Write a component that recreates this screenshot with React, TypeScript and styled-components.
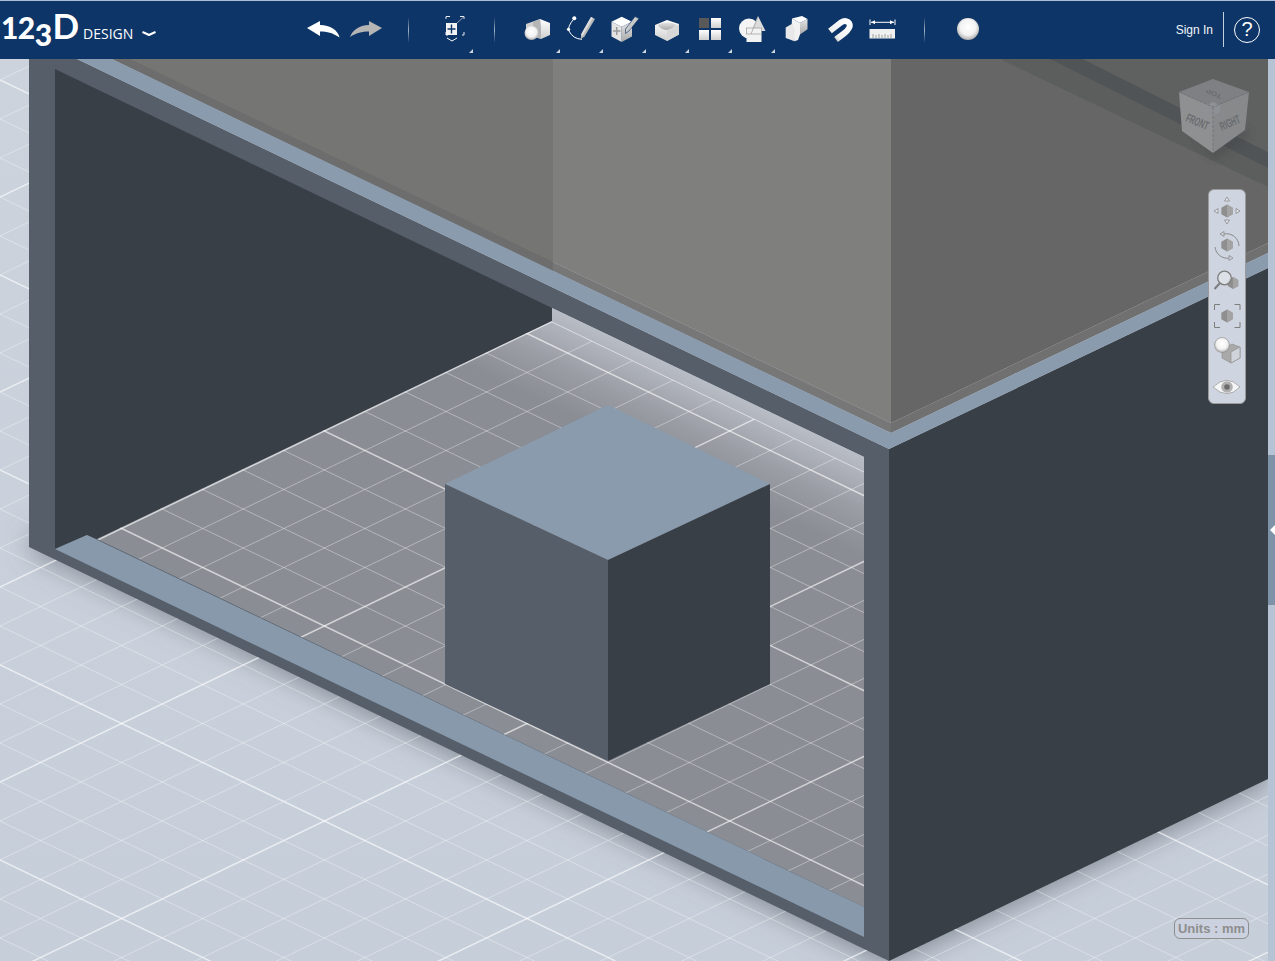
import React from "react";
import styled, { createGlobalStyle } from "styled-components";

const GlobalStyle = createGlobalStyle`
  html, body { margin: 0; padding: 0; height: 100%; overflow: hidden; background: #c8d0da; }
  #root { height: 100%; }
`;

const Page = styled.div`
  display: flex;
  flex-direction: column;
  width: 1275px;
  height: 961px;
  font-family: "Liberation Sans", Arial, sans-serif;
`;

const Toolbar = styled.header`
  display: flex;
  align-items: stretch;
  flex: 0 0 59px;
  height: 59px;
  padding-left: 1px;
  box-sizing: border-box;
  background: #0d3568;
  box-shadow: inset 0 1px 0 #a9bfd8;
  color: #fff;
`;

const Logo = styled.div`
  display: flex;
  align-items: baseline;
  width: 159px;
  padding-top: 11px;
  box-sizing: border-box;
  font-family: Lato, "Open Sans", sans-serif;
  line-height: 29px;
`;

const LogoDigit = styled.span<{ $drop?: number }>`
  display: inline-block;
  font-size: 30px;
  font-weight: 900;
  letter-spacing: -0.6px;
  transform: translateY(${(p) => p.$drop ?? 0}px);
`;

const LogoD = styled.span`
  font-size: 35px;
  font-weight: 700;
  margin-left: 1px;
`;

const DesignLabel = styled.span`
  font-family: "Open Sans", sans-serif;
  font-size: 14px;
  margin-left: 4px;
`;

const Chevron = styled.svg`
  width: 16px;
  height: 8px;
  margin-left: 8px;
  align-self: center;
  position: relative;
  top: -1px;
`;

const ToolGroup = styled.div<{ $gap?: number }>`
  display: flex;
  margin-left: ${(p) => p.$gap ?? 0}px;
`;

const Divider = styled.div<{ $gap: number }>`
  width: 1px;
  height: 26px;
  align-self: center;
  margin-left: ${(p) => p.$gap}px;
  position: relative;
  background: linear-gradient(180deg, rgba(170, 185, 205, 0), #a4b2c6 50%, rgba(170, 185, 205, 0));
`;

const ToolCell = styled.div<{ $menu?: boolean; $w: number }>`
  position: relative;
  width: ${(p) => p.$w}px;
  height: 59px;
  &::after {
    content: "";
    display: ${(p) => (p.$menu ? "block" : "none")};
    position: absolute;
    right: 0;
    bottom: 6px;
    width: 0;
    height: 0;
    border-style: solid;
    border-width: 0 0 4px 4px;
    border-color: transparent transparent #cfd6e0 transparent;
  }
`;

const ToolIcon = styled.svg`
  display: block;
  width: 100%;
  height: 100%;
`;

const Account = styled.div`
  display: flex;
  align-items: center;
  margin-left: auto;
  padding-right: 15px;
  gap: 10px;
`;

const SignIn = styled.span`
  font-size: 12px;
  color: #f2f5f9;
`;

const AccountRule = styled.div`
  width: 1px;
  height: 35px;
  background: #c4d0df;
`;

const HelpCircle = styled.div`
  width: 26px;
  height: 26px;
  box-sizing: border-box;
  border: 1.5px solid #fff;
  border-radius: 50%;
  display: flex;
  align-items: center;
  justify-content: center;
  font-size: 20px;
  font-weight: 400;
  color: #fff;
`;

const Workspace = styled.main`
  display: flex;
  flex: 1;
  min-height: 0;
`;

const Viewport = styled.section`
  position: relative;
  width: 1268px;
  height: 902px;
  overflow: hidden;
`;

const Scene = styled.svg`
  display: block;
  width: 1268px;
  height: 902px;
`;

const SidePanel = styled.aside`
  width: 7px;
  background: #b5c3d5;
  overflow: hidden;
`;

const SideHandle = styled.div`
  position: relative;
  margin-top: 396px;
  height: 150px;
  background: #7f93a8;
  &::after {
    content: "";
    position: absolute;
    left: 2px;
    top: 70px;
    width: 10px;
    height: 10px;
    background: #fff;
    clip-path: polygon(50% 0, 100% 50%, 50% 100%, 0 50%);
  }
`;

const CubeOverlay = styled.svg`
  position: absolute;
  left: 1170px;
  top: 11px;
  width: 90px;
  height: 95px;
`;

const NavBar = styled.nav`
  position: absolute;
  top: 130px;
  right: 22px;
  width: 38px;
  height: 215px;
  box-sizing: border-box;
  padding-top: 3px;
  display: flex;
  flex-direction: column;
  background: #cfd5e0;
  border: 1px solid #9a9a9a;
  border-radius: 6px;
`;

const NavIcon = styled.svg`
  display: block;
  flex: 0 0 35px;
  width: 36px;
  height: 35px;
`;

const UnitsBadge = styled.div`
  position: absolute;
  left: 1174px;
  top: 859px;
  width: 75px;
  height: 21px;
  box-sizing: border-box;
  border: 1px solid #8f8f8f;
  border-radius: 6px;
  background: #cbd1de;
  display: flex;
  align-items: center;
  justify-content: center;
  font-size: 13px;
  font-weight: 700;
  color: #8e8e8e;
  white-space: nowrap;
`;

const HiddenDefs = styled.svg`
  position: absolute;
  width: 0;
  height: 0;
`;

const M = 0.481;
const X1 = 1268;
const STEP = 39;

function Grid() {
  const lines: React.ReactElement[] = [];
  for (let k = -30; k <= 30; k++) {
    const c = 470 + k * STEP;
    const major = ((k % 5) + 5) % 5 === 0;
    lines.push(
      <line key={`a${k}`} x1={0} y1={c} x2={X1} y2={c + M * X1} stroke="#fff" strokeOpacity={major ? 0.62 : 0.36} strokeWidth={major ? 1.5 : 1} />
    );
  }
  for (let k = -14; k <= 30; k++) {
    const d = 587 + k * STEP;
    const major = ((k % 5) + 5) % 5 === 0;
    lines.push(
      <line key={`b${k}`} x1={0} y1={d} x2={X1} y2={d - M * X1} stroke="#fff" strokeOpacity={major ? 0.62 : 0.36} strokeWidth={major ? 1.5 : 1} />
    );
  }
  return <g>{lines}</g>;
}

function SceneDrawing() {
  const floor = "552,308 864,457 864,907 97,539 552,321";
  return (
    <Scene viewBox="0 59 1268 902">
      <defs>
        <linearGradient id="floorGrad" gradientUnits="userSpaceOnUse" x1="700" y1="378" x2="661" y2="459">
          <stop offset="0" stopColor="#b9bdc6" />
          <stop offset="0.55" stopColor="#9a9da4" />
          <stop offset="1" stopColor="#8a8d94" />
        </linearGradient>
        <linearGradient id="groundGrad" x1="0" y1="0" x2="0" y2="1">
          <stop offset="0" stopColor="#ccd3dd" />
          <stop offset="1" stopColor="#c6ced9" />
        </linearGradient>
        <filter id="softShadow" x="-10%" y="-10%" width="120%" height="120%">
          <feGaussianBlur stdDeviation="13" />
        </filter>
        <clipPath id="floorClip">
          <polygon points={floor} />
        </clipPath>
      </defs>
      <rect x="0" y="59" width="1268" height="902" fill="url(#groundGrad)" />
      <g filter="url(#softShadow)">
        <polygon points="34,530 30,552 889,966 1268,784 1268,740 889,900" fill="#737a84" fillOpacity="0.8" />
      </g>
      <Grid />
      <polygon points="29,59 77,59 889,449 889,961 29,547" fill="#565e6a" />
      <polygon points="55,69 552,308 552,321 97,539 87,535 55,549" fill="#393f47" />
      <polygon points={floor} fill="url(#floorGrad)" />
      <g clipPath="url(#floorClip)">
        <Grid />
      </g>
      <polygon points="552,308 864,457 864,472 552,322" fill="url(#floorGrad)" />
      <line x1="552" y1="322" x2="864" y2="472" stroke="#fff" strokeOpacity="0.55" strokeWidth="1" />
      <polygon points="55,549 87,535 864,907 864,937" fill="#8799ab" />
      <polygon points="608,405 770,484 608,560 445,484" fill="#8a9bad" />
      <polygon points="445,484 608,560 608,761 445,684" fill="#565e6a" />
      <polygon points="608,560 770,484 770,684 608,761" fill="#393f47" />
      <polygon points="889,449 1268,268 1268,779 889,961" fill="#393f47" />
      <polygon points="553,59 891,59 891,423 553,262" fill="#7f7f7d" />
      <polygon points="112,59 553,59 553,272" fill="#757574" />
      <polygon points="891,59 1268,59 1268,243 891,423" fill="#666666" />
      <polygon points="1000,59 1050,59 1268,168 1268,187" fill="#5c5e5d" />
      <polygon points="1050,59 1083,59 1268,152 1268,168" fill="#505456" />
      <polygon points="1083,59 1268,59 1268,152" fill="#5f6060" />
      <polygon points="112,59 130,59 553,262 553,271" fill="#6d6d6d" />
      <polygon points="553,262 891,423 891,433 553,271" fill="#777777" />
      <polygon points="891,423 1268,243 1268,253 891,433" fill="#707070" />
      <polygon points="77,59 112,59 891,433 1268,253 1268,268 889,449" fill="#8a9bad" />
    </Scene>
  );
}

function ViewCube() {
  return (
    <CubeOverlay viewBox="1170 70 90 95">
      <defs>
        <filter id="cubeBlur" x="-30%" y="-30%" width="160%" height="160%">
          <feGaussianBlur stdDeviation="4" />
        </filter>
      </defs>
      <polygon points="1190,132 1213,152 1250,128 1246,138 1214,160" fill="#3f4244" fillOpacity="0.55" filter="url(#cubeBlur)" />
      <polygon points="1213,79 1249,92 1213,107 1179,92" fill="#7f8083" />
      <polygon points="1179,92 1213,107 1213,153 1182,131" fill="#8f9091" />
      <polygon points="1213,107 1249,92 1245,130 1213,153" fill="#87898a" />
      <polygon points="1213,102 1220,105 1220,112 1213,116 1207,112 1207,105" fill="#8d9094" />
      <path d="M1179 92 L1213 107 L1249 92 M1213 107 V153" stroke="#6e7074" strokeWidth="0.8" strokeDasharray="3 1.5" fill="none" />
      <text transform="translate(1185 121) rotate(23) scale(0.68 1.2)" fontFamily="Liberation Sans, sans-serif" fontSize="10" fontWeight="700" fill="#696c70">FRONT</text>
      <text transform="translate(1221.7 130.7) rotate(-23) scale(0.68 1.2)" fontFamily="Liberation Sans, sans-serif" fontSize="10" fontWeight="700" fill="#696c70">RIGHT</text>
      <text transform="translate(1222 95) rotate(204) scale(1 0.8)" fontFamily="Liberation Sans, sans-serif" fontSize="8" fontWeight="700" fill="#696c70">TOP</text>
    </CubeOverlay>
  );
}

const hexPts = (cx: number, cy: number, r: number) =>
  [
    [cx, cy - r],
    [cx + r * 0.87, cy - r / 2],
    [cx + r * 0.87, cy + r / 2],
    [cx, cy + r],
    [cx - r * 0.87, cy + r / 2],
    [cx - r * 0.87, cy - r / 2],
  ]
    .map((p) => p.join(","))
    .join(" ");

function Hex({ cx, cy, r = 6.5 }: { cx: number; cy: number; r?: number }) {
  return (
    <g>
      <polygon points={hexPts(cx, cy, r)} fill="#8f8f8f" />
      <polygon points={`${cx},${cy - r} ${cx + r * 0.87},${cy - r / 2} ${cx + r * 0.87},${cy + r / 2} ${cx},${cy + r}`} fill="#a3a3a3" />
    </g>
  );
}

function NavTools() {
  const vb = (i: number) => `1209 ${193 + 35 * i} 36 35`;
  return (
    <NavBar>
      <NavIcon viewBox={vb(0)}>
        <Hex cx={1227} cy={211} />
        <path d="M1227 197 L1229.5 201 H1224.5 Z M1227 224 L1229.5 220 H1224.5 Z M1214 211 L1218 208.5 V213.5 Z M1240 211 L1236 208.5 V213.5 Z" fill="#e2e5eb" stroke="#8a8a8a" strokeWidth="0.8" />
      </NavIcon>
      <NavIcon viewBox={vb(1)}>
        <Hex cx={1227} cy={245} />
        <path d="M1224 234 A12.5 12.5 0 0 1 1239 246 M1215 247 A12.5 12.5 0 0 0 1230 258" fill="none" stroke="#8a8a8a" strokeWidth="1" />
        <path d="M1224 231.5 V236.5 L1220 234 Z M1229 255.5 V260.5 L1233 258 Z" fill="#cfd5e0" stroke="#8a8a8a" strokeWidth="0.8" />
      </NavIcon>
      <NavIcon viewBox={vb(2)}>
        <Hex cx={1233} cy={283} r={6} />
        <circle cx="1224.5" cy="278" r="6.8" fill="#dfe3ea" fillOpacity="0.8" stroke="#7d7d7d" strokeWidth="1.3" />
        <line x1="1220" y1="283" x2="1214.5" y2="289" stroke="#7d7d7d" strokeWidth="2" />
      </NavIcon>
      <NavIcon viewBox={vb(3)}>
        <path d="M1214.5 310 V304.5 H1220 M1234.5 304.5 H1240 V310 M1214.5 322 V327.5 H1220 M1234.5 327.5 H1240 V322" fill="none" stroke="#7d7d7d" strokeWidth="1" />
        <Hex cx={1227} cy={316} />
      </NavIcon>
      <NavIcon viewBox={vb(4)}>
        <polygon points="1222,350 1232,344 1240,347 1240,358 1231,363 1222,358" fill="#a9a9a9" stroke="#929292" strokeWidth="0.7" />
        <polygon points="1231,352 1240,347 1240,358 1231,363" fill="#d0d3d9" stroke="#929292" strokeWidth="0.7" />
        <circle cx="1222" cy="345" r="7.5" fill="url(#sphereGrad)" stroke="#8a8a8a" strokeWidth="0.6" />
      </NavIcon>
      <NavIcon viewBox={vb(5)}>
        <path d="M1213 387 Q1227 373.5 1240 387 Q1227 400.5 1213 387 Z" fill="#f4f5f7" stroke="#9a9a9a" strokeWidth="0.8" />
        <circle cx="1227" cy="387" r="5.8" fill="#b0b0b0" />
        <circle cx="1227" cy="387" r="2.8" fill="#6b6b6b" />
      </NavIcon>
    </NavBar>
  );
}

export default function App() {
  return (
    <Page>
      <GlobalStyle />
      <HiddenDefs aria-hidden="true">
        <defs>
          <linearGradient id="lightGrad" x1="0" y1="0" x2="0" y2="1">
            <stop offset="0" stopColor="#ffffff" />
            <stop offset="1" stopColor="#cfcfcf" />
          </linearGradient>
          <linearGradient id="sideGrad" x1="0" y1="0" x2="0" y2="1">
            <stop offset="0" stopColor="#e4e4e4" />
            <stop offset="1" stopColor="#a9a9a9" />
          </linearGradient>
          <radialGradient id="sphereGrad" cx="0.5" cy="0.42" r="0.6">
            <stop offset="0" stopColor="#ffffff" />
            <stop offset="0.6" stopColor="#f2f2f2" />
            <stop offset="1" stopColor="#a5a5a5" />
          </radialGradient>
          <linearGradient id="magnetGrad" x1="0" y1="1" x2="1" y2="0">
            <stop offset="0" stopColor="#8e8e8e" />
            <stop offset="0.25" stopColor="#f0f0f0" />
            <stop offset="1" stopColor="#ffffff" />
          </linearGradient>
        </defs>
      </HiddenDefs>

      <Toolbar>
        <Logo>
          <LogoDigit>1</LogoDigit>
          <LogoDigit>2</LogoDigit>
          <LogoDigit $drop={7}>3</LogoDigit>
          <LogoD>D</LogoD>
          <DesignLabel>DESIGN</DesignLabel>
          <Chevron viewBox="0 0 16 8">
            <path d="M1.5 2 Q5 3.5 8 5 Q11 3.5 14.5 2" fill="none" stroke="#fff" strokeWidth="2" />
          </Chevron>
        </Logo>

        <ToolGroup $gap={144}>
          <ToolCell $w={40}>
            <ToolIcon viewBox="304 0 40 59">
              <path d="M307 28 L320 21 L320 25 C330 25 338 30 339.5 37.5 C333 33 327 31.5 320 31.5 L320 36 Z" fill="#fff" />
            </ToolIcon>
          </ToolCell>
          <ToolCell $w={44}>
            <ToolIcon viewBox="344 0 44 59">
              <path d="M382 28 L369 21 L369 25 C359 25 352 31 350 37 C356 33 362 31.5 369 31.5 L369 36 Z" fill="#b5b5b5" />
            </ToolIcon>
          </ToolCell>
        </ToolGroup>

        <Divider $gap={20} />

        <ToolGroup $gap={21}>
          <ToolCell $w={43} $menu>
            <ToolIcon viewBox="430 0 43 59">
              <path d="M446 19 V16.5 H450 M460 16.5 H464 V19 M446 32 V35 H448 M462 35 H464 V32" fill="none" stroke="#e6e9ee" strokeWidth="1" />
              <line x1="457" y1="23" x2="463" y2="17.5" stroke="#c8ccd4" strokeWidth="0.7" />
              <rect x="446" y="23" width="11" height="12" fill="#f4f4f4" />
              <path d="M451.5 24.5 V33.5 M447.5 29 H455.5" stroke="#0d3568" strokeWidth="1.4" />
              <path d="M447 38 L452 41 L457 38" fill="none" stroke="#fff" strokeWidth="1" />
            </ToolIcon>
          </ToolCell>
        </ToolGroup>

        <Divider $gap={21} />

        <ToolGroup $gap={22}>
          <ToolCell $w={43} $menu>
            <ToolIcon viewBox="517 0 43 59">
              <polygon points="526,24 540,19 541,39 526,34" fill="#cfcfcf" />
              <polygon points="540,19 550,23 550,35 541,39" fill="url(#lightGrad)" />
              <polygon points="533,22 540,19 541,39 534,36" fill="#b5b5b5" />
              <circle cx="531.5" cy="33" r="7" fill="url(#sphereGrad)" />
            </ToolIcon>
          </ToolCell>
          <ToolCell $w={43} $menu>
            <ToolIcon viewBox="560 0 43 59">
              <path d="M574.3 18.3 Q567 27 569 31 Q573 39 582 39.3" fill="none" stroke="#fff" strokeWidth="1" />
              <circle cx="574.3" cy="18.3" r="2" fill="#fff" />
              <circle cx="568.5" cy="29.3" r="1.6" fill="#fff" />
              <polygon points="591,17 595,19 584.5,36.5 581,39 581,34.5" fill="#b9b9b9" />
              <polygon points="591,17 593,18 582.5,36 581,34.5" fill="#dedede" />
            </ToolIcon>
          </ToolCell>
          <ToolCell $w={43} $menu>
            <ToolIcon viewBox="603 0 43 59">
              <polygon points="611.5,21.7 621.7,16.7 632,21.7 621.7,26.7" fill="#ffffff" />
              <polygon points="611.5,21.7 621.7,26.7 621.7,42 611.5,36.5" fill="#e3e3e3" />
              <polygon points="621.7,26.7 632,21.7 632,36.5 621.7,42" fill="url(#sideGrad)" />
              <path d="M616.7 27 V35 M613 31 H620.5" stroke="#9a9a9a" strokeWidth="1.5" />
              <polygon points="635,16.5 639,18.5 629,31 625.5,33.5 625.5,29" fill="#c9c9c9" stroke="#0d3568" strokeWidth="0.6" />
            </ToolIcon>
          </ToolCell>
          <ToolCell $w={43} $menu>
            <ToolIcon viewBox="646 0 43 59">
              <polygon points="655,25 667,20 679,24 679,34.5 667,41 655,35" fill="url(#lightGrad)" />
              <polygon points="667,31 679,24 679,34.5 667,41" fill="#d7d7d7" />
              <path d="M657.5 25 Q666 35 676.5 24.5 Q667 20.5 657.5 25 Z" fill="url(#sideGrad)" />
            </ToolIcon>
          </ToolCell>
          <ToolCell $w={43} $menu>
            <ToolIcon viewBox="689 0 43 59">
              <rect x="699" y="18" width="10" height="10" fill="#595959" />
              <rect x="711" y="18" width="10" height="10" fill="url(#lightGrad)" />
              <rect x="699" y="30" width="10" height="10" fill="url(#lightGrad)" />
              <rect x="711" y="30" width="10" height="10" fill="url(#lightGrad)" />
            </ToolIcon>
          </ToolCell>
          <ToolCell $w={43} $menu>
            <ToolIcon viewBox="732 0 43 59">
              <circle cx="749" cy="28.5" r="10" fill="#f4f4f4" />
              <polygon points="758,16 765.5,31 751,31" fill="#dcdcdc" />
              <rect x="746.5" y="28" width="15" height="14" fill="#f2f2f2" />
              <rect x="746.5" y="28" width="15" height="6" fill="none" stroke="#9a9a9a" strokeWidth="0.7" />
              <path d="M758 17 L751 34" stroke="#9a9a9a" strokeWidth="0.7" />
            </ToolIcon>
          </ToolCell>
          <ToolCell $w={43}>
            <ToolIcon viewBox="775 0 43 59">
              <polygon points="785.7,27.5 791.7,24 798,28 794.5,41.3 785.7,38" fill="#e8e8e8" />
              <polygon points="792,18.5 802,16 807.5,19 800,23" fill="#ffffff" />
              <polygon points="792,18.5 800,23 800,34.5 798,40 794.5,41.3 794.5,28 791.7,24" fill="#f2f2f2" />
              <polygon points="800,23 807.5,19 807.5,29.3 800,34.5" fill="url(#sideGrad)" />
            </ToolIcon>
          </ToolCell>
          <ToolCell $w={43}>
            <ToolIcon viewBox="818 0 43 59">
              <path d="M830 31 L841 22.5 C846 19 852 23 849 28 C848 30 846 32 844 33.5 L836 39.5" fill="none" stroke="url(#magnetGrad)" strokeWidth="6" />
            </ToolIcon>
          </ToolCell>
          <ToolCell $w={43}>
            <ToolIcon viewBox="861 0 43 59">
              <path d="M870 19.5 V25 M895 19.5 V25 M871 22.3 H894" stroke="#fff" strokeWidth="1" />
              <path d="M871 22.3 L875 20.3 V24.3 Z M894 22.3 L890 20.3 V24.3 Z" fill="#fff" />
              <rect x="869.5" y="29" width="25.5" height="9.5" fill="#f0f0f0" />
              <path d="M873 38 V34 M876 38 V35 M879 38 V34 M882 38 V35 M885 38 V34 M888 38 V35 M891 38 V34" stroke="#8a8a8a" strokeWidth="0.8" />
            </ToolIcon>
          </ToolCell>
        </ToolGroup>

        <Divider $gap={20} />

        <ToolGroup $gap={21}>
          <ToolCell $w={44}>
            <ToolIcon viewBox="946 0 44 59">
              <circle cx="968" cy="29" r="11" fill="url(#sphereGrad)" />
            </ToolIcon>
          </ToolCell>
        </ToolGroup>

        <Account>
          <SignIn>Sign In</SignIn>
          <AccountRule />
          <HelpCircle>?</HelpCircle>
        </Account>
      </Toolbar>

      <Workspace>
        <Viewport>
          <SceneDrawing />
          <ViewCube />
          <NavTools />
          <UnitsBadge>Units : mm</UnitsBadge>
        </Viewport>
        <SidePanel>
          <SideHandle />
        </SidePanel>
      </Workspace>
    </Page>
  );
}
